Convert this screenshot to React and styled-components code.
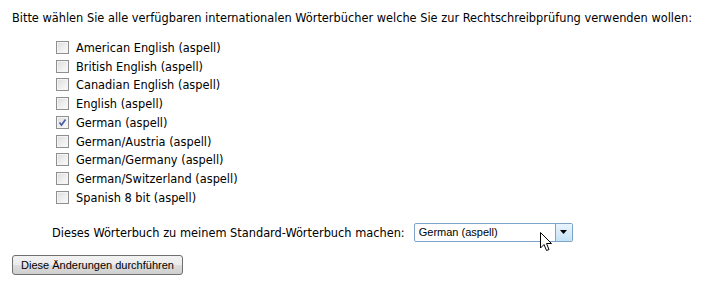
import React from "react";
import styled, { createGlobalStyle } from "styled-components";

const Global = createGlobalStyle`
  html, body { margin: 0; padding: 0; background: #fff; }
  body { font-family: "DejaVu Sans Condensed", "DejaVu Sans", sans-serif; font-size: 12.65px; color: #000; }
`;

const Page = styled.div`
  width: 710px;
  height: 290px;
  padding: 9px 0 0 12px;
  box-sizing: border-box;
  position: relative;
`;

const Title = styled.div`
  height: 17px;
  line-height: 17px;
  white-space: nowrap;
`;

const List = styled.div`
  margin: 12px 0 0 44px;
  display: flex;
  flex-direction: column;
`;

const Row = styled.label`
  display: flex;
  align-items: center;
  gap: 7px;
  height: 18.75px;
`;

const Box = styled.span`
  width: 11px;
  height: 11px;
  border: 1px solid #8f8f8f;
  background: linear-gradient(135deg, #dcdcdc 0%, #f0f0f0 60%, #fbfbfb 100%);
  box-shadow: inset 0 0 0 1px #f4f4f4;
  position: relative;
  flex: none;
`;

const Check = styled.svg`
  position: absolute;
  left: 1px;
  top: 1px;
`;

const SelectRow = styled.div`
  margin: 16px 0 0 40px;
  display: flex;
  align-items: center;
  gap: 9px;
  height: 19px;
  white-space: nowrap;
`;

const Select = styled.div`
  width: 157px;
  height: 17px;
  border: 1px solid #7ea4c7;
  border-radius: 2px;
  display: flex;
  align-items: stretch;
  font-family: "Liberation Sans", Arial, sans-serif;
  font-size: 11px;
`;

const SelectText = styled.div`
  flex: 1;
  padding-left: 4px;
  line-height: 17px;
`;

const Arrow = styled.div`
  width: 16px;
  border-left: 1px solid #7ea4c7;
  background: linear-gradient(#eaf5fd, #c5e2f7);
  display: flex;
  align-items: center;
  justify-content: center;
`;

const Button = styled.button`
  margin-top: 13px;
  width: 171px;
  height: 20px;
  border: 1px solid #707070;
  border-radius: 3px;
  background: linear-gradient(#f2f2f2 0%, #ebebeb 50%, #dddddd 51%, #cfcfcf 100%);
  font-family: "Liberation Sans", Arial, sans-serif;
  font-size: 11px;
  color: #000;
  padding: 0;
`;

const Cursor = styled.svg`
  position: absolute;
  left: 540px;
  top: 232px;
`;

const items = [
  "American English (aspell)",
  "British English (aspell)",
  "Canadian English (aspell)",
  "English (aspell)",
  "German (aspell)",
  "German/Austria (aspell)",
  "German/Germany (aspell)",
  "German/Switzerland (aspell)",
  "Spanish 8 bit (aspell)",
];

export default function App() {
  return (
    <Page>
      <Global />
      <Title>
        Bitte wählen Sie alle verfügbaren internationalen Wörterbücher welche Sie zur Rechtschreibprüfung verwenden wollen:
      </Title>
      <List>
        {items.map((t) => (
          <Row key={t}>
            <Box>
              {t === "German (aspell)" && (
                <Check width="9" height="9" viewBox="0 0 9 9">
                  <path d="M1.5 4.5 L3.5 7 L7.5 1.5" fill="none" stroke="#4a5da8" strokeWidth="1.7" />
                </Check>
              )}
            </Box>
            {t}
          </Row>
        ))}
      </List>
      <SelectRow>
        Dieses Wörterbuch zu meinem Standard-Wörterbuch machen:
        <Select>
          <SelectText>German (aspell)</SelectText>
          <Arrow>
            <svg width="7" height="4" viewBox="0 0 7 4">
              <path d="M0 0 H7 L3.5 4 Z" fill="#000" />
            </svg>
          </Arrow>
        </Select>
      </SelectRow>
      <Button>Diese Änderungen durchführen</Button>
      <Cursor width="13" height="20" viewBox="0 0 13 20">
        <path d="M0.5 0.5 V16 L4 12.5 L6.5 18.5 L9 17.5 L6.5 11.5 H11.5 Z" fill="#fff" stroke="#000" strokeWidth="1" strokeLinejoin="round" />
      </Cursor>
    </Page>
  );
}
